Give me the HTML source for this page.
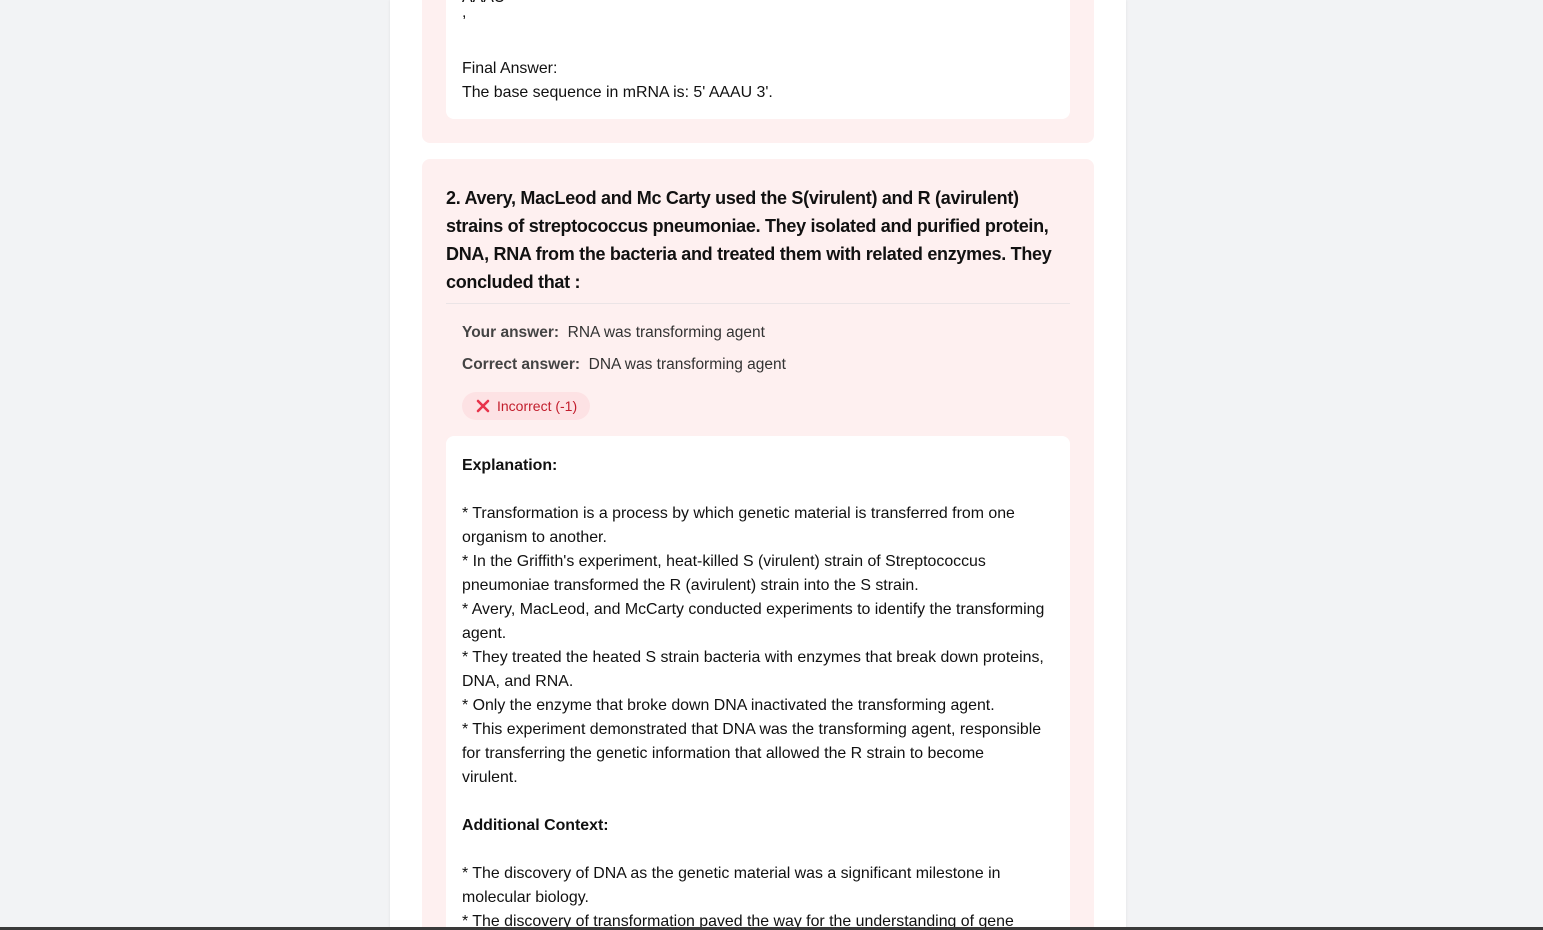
<!DOCTYPE html>
<html><head><meta charset="utf-8"><style>
*{box-sizing:border-box;margin:0;padding:0}
html,body{width:1543px;height:930px;overflow:hidden;background:#f2f3f5;font-family:"Liberation Sans",sans-serif;color:#111}
.col{position:absolute;left:390px;top:0;width:736px;height:930px;background:#fff;box-shadow:0 0 3px rgba(0,0,0,.08)}
.card{position:absolute;left:422px;width:672px;background:#fef0f0;border-radius:8px}
.inner{position:absolute;left:446px;width:624px;background:#fff;border-radius:8px;padding:0 16px;font-size:15.9px;line-height:24px;overflow:hidden}
.q{position:absolute;left:446px;top:184px;width:624px;font-size:18px;font-weight:bold;line-height:28px;letter-spacing:-0.3px}
.hr{position:absolute;left:446px;top:303px;width:624px;height:1px;background:#ebe4e6}
.ans{position:absolute;left:462px;font-size:15.5px;color:#333}
.ans b{color:#444}
.badge{position:absolute;left:462px;top:392px;width:128px;height:28px;border-radius:14px;background:#fde2e4;color:#c21d2c;font-size:14px;line-height:28px;padding-left:35px}
.bar{position:absolute;left:0;top:927px;width:1543px;height:3px;background:#3a3a3a}
.t{position:absolute;left:462px;font-size:15.9px;line-height:24px}
</style></head><body>
<div class="col"></div>
<div class="card" style="top:-10px;height:153px"></div>
<div class="inner" style="top:-10px;height:129px"></div>
<div class="t" style="top:-14px">AAAU</div>
<div class="t" style="top:1px">,</div>
<div class="t" style="top:57px">Final Answer:</div>
<div class="t" style="top:81px">The base sequence in mRNA is: 5' AAAU 3'.</div>
<div class="card" style="top:159px;height:771px;border-radius:8px 8px 0 0"></div>
<div class="q">2. Avery, MacLeod and Mc Carty used the S(virulent) and R (avirulent)<br>strains of streptococcus pneumoniae. They isolated and purified protein,<br>DNA, RNA from the bacteria and treated them with related enzymes. They<br>concluded that :</div>
<div class="hr"></div>
<div class="ans" style="top:324px"><b>Your answer:</b>&nbsp; RNA was transforming agent</div>
<div class="ans" style="top:356px"><b>Correct answer:</b>&nbsp; DNA was transforming agent</div>
<div class="badge"><svg style="position:absolute;left:14px;top:7px" width="14" height="14" viewBox="0 0 14 14"><path d="M2 2L12 12M12 2L2 12" stroke="#e8334a" stroke-width="2.6" stroke-linecap="round"/></svg>Incorrect (-1)</div>
<div class="inner" style="top:436px;height:494px;padding-top:18px;border-radius:8px 8px 0 0">
<b>Explanation:</b><br><br>
* Transformation is a process by which genetic material is transferred from one<br>organism to another.<br>
* In the Griffith's experiment, heat-killed S (virulent) strain of Streptococcus<br>pneumoniae transformed the R (avirulent) strain into the S strain.<br>
* Avery, MacLeod, and McCarty conducted experiments to identify the transforming<br>agent.<br>
* They treated the heated S strain bacteria with enzymes that break down proteins,<br>DNA, and RNA.<br>
* Only the enzyme that broke down DNA inactivated the transforming agent.<br>
* This experiment demonstrated that DNA was the transforming agent, responsible<br>for transferring the genetic information that allowed the R strain to become<br>virulent.<br><br>
<b>Additional Context:</b><br><br>
* The discovery of DNA as the genetic material was a significant milestone in<br>molecular biology.<br>
* The discovery of transformation paved the way for the understanding of gene
</div>
<div class="bar"></div>
</body></html>
